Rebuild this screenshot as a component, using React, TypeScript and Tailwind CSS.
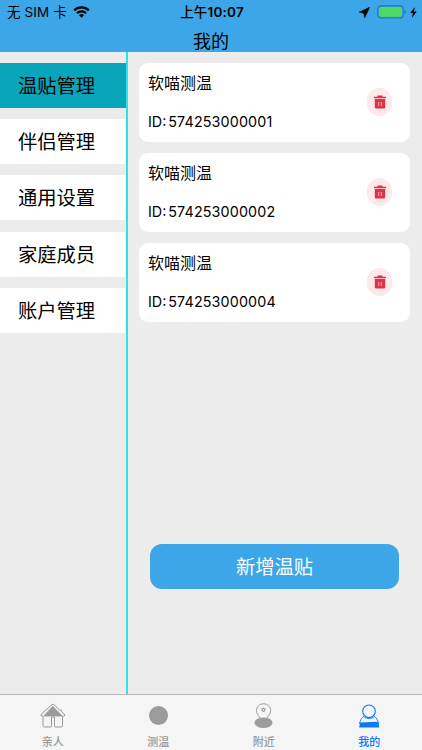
import React from "react";

const menu = ["温贴管理", "伴侣管理", "通用设置", "家庭成员", "账户管理"];
const patches = ["574253000001", "574253000002", "574253000004"];

function StatusBar() {
  return (
    <div className="grid h-6 grid-cols-[1fr_auto_1fr] items-center pl-[7px] pr-[5px] text-[13.5px] leading-6">
      <div className="flex items-center gap-[6px]">
        <span className="whitespace-nowrap tracking-[0.1px]">无 SIM 卡</span>
        <svg width="17" height="12" viewBox="0 0 17 12" fill="none" stroke="#000" strokeWidth="2.2">
          <path d="M1.2 4.4a10.4 10.4 0 0 1 14.6 0" />
          <path d="M4 7.3a6.4 6.4 0 0 1 9 0" />
          <path d="M8.5 11.8 6 9.3a3.5 3.5 0 0 1 5 0Z" fill="#000" stroke="none" />
        </svg>
      </div>
      <span className="whitespace-nowrap text-[13.5px] font-medium tracking-[0.2px]">
        上午<span className="font-semibold">10:07</span>
      </span>
      <div className="flex items-center justify-end">
        <svg width="11" height="11" viewBox="0 0 11 11" className="mr-[7px]">
          <path d="M10.9 0 0 5.2l4.7 1 1 4.8Z" stroke="#000" strokeWidth=".4" />
        </svg>
        <svg width="30" height="14" viewBox="0 0 30 14">
          <rect x=".75" y=".75" width="25.5" height="12.2" rx="3.5" fill="none" stroke="#247eae" strokeWidth="1.3" />
          <rect x="2" y="2" width="23" height="9.7" rx="2" fill="#4cd964" />
          <path d="M27.5 4.8c2 .7 2 3.5 0 4.2Z" fill="#247eae" />
        </svg>
        <svg width="7" height="11" viewBox="0 0 7 11" className="ml-[3px]">
          <path d="M4.8 0 .2 6h2.7l-1 4.8L6.8 4.5H4Z" />
        </svg>
      </div>
    </div>
  );
}

function TrashButton() {
  return (
    <button className="mb-[1px] flex h-7 w-[25px] items-center justify-center rounded-full bg-[#fde8eb]" aria-label="删除">
      <svg width="12" height="14" viewBox="0 0 12 14" fill="#dc3349">
        <path d="M3.5 1.8V.4h5v1.4H12v1.4H0V1.8Z" />
        <path d="M.8 3.9h10.4v8.4a1.2 1.2 0 0 1-1.2 1.2H2A1.2 1.2 0 0 1 .8 12.3Z" />
        <path d="M4.7 7v4M7.3 7v4" stroke="#f5a9b3" strokeWidth="1" />
      </svg>
    </button>
  );
}

function HomeIcon() {
  return (
    <svg width="26" height="26" viewBox="0 0 26 26" fill="none" stroke="#999" strokeWidth="1">
      <path d="M3 13.2v9.3q0 1.5 1.5 1.5h6q1 0 1-1.2V14h3v8.8q0 1.2 1 1.2H21q1.5 0 1.5-1.5v-9.3l2-.3q.9-.9-.2-1.8L21.6 8.8V7.3h-1.8L14.2 1.7q-1.2-1-2.4 0L1.3 11.1q-1 1 .2 1.9Z" />
      <path d="M4 12.9 12.8 3.4 22 12.9Z" fill="#9b9b9b" />
    </svg>
  );
}

function PinIcon() {
  return (
    <svg width="26" height="26" viewBox="0 0 26 26" fill="none" stroke="#999">
      <ellipse cx="12.5" cy="19.8" rx="9" ry="5.2" fill="#9d9d9d" stroke="none" />
      <path d="M12.5 20c-1.2-4.7-7-7.3-7-12.4C5.5 3.9 8.5.8 12.5.8s7.2 3.1 7.2 6.8c0 5.1-6 7.7-7.2 12.4Z" />
      <path d="M7.5 15.5h10l-3 5h-4Z" fill="#9d9d9d" stroke="none" />
      <circle cx="12.5" cy="6.8" r="1.5" strokeWidth="1.2" />
    </svg>
  );
}

function PersonIcon() {
  return (
    <svg width="26" height="26" viewBox="0 0 26 26" fill="none" stroke="#087bf5">
      <circle cx="13" cy="8.3" r="6.3" strokeWidth="1.1" />
      <path d="M8.5 13c-2.7 1-4.7 4.8-5 8M17.6 13c2.6 1 4.8 4.8 5.1 8M8.5 14.7q4.5 1.6 9 0" strokeWidth=".9" />
      <path d="M4.2 19.5 20.5 18.8q1.7-.1 2.1 1.5l.7 4.1H3.1Z" fill="#087bf5" stroke="none" />
    </svg>
  );
}

const tabs = [
  { label: "亲人", icon: <HomeIcon />, active: false },
  { label: "测温", icon: <span className="mt-[3px] size-[19px] rounded-full bg-[#9b9b9b]" />, active: false },
  { label: "附近", icon: <PinIcon />, active: false },
  { label: "我的", icon: <PersonIcon />, active: true },
];

export default function App() {
  return (
    <div className="flex h-[750px] w-[422px] flex-col overflow-hidden bg-[#ececec] font-[Inter,'Noto_Sans_CJK_SC',sans-serif] text-black">
      <header className="h-[52px] shrink-0 bg-[#3da6e8]">
        <StatusBar />
        <h1 className="pt-1 text-center text-[18px] leading-[28px]">我的</h1>
      </header>
      <main className="flex min-h-0 flex-1">
        <nav className="flex w-[126.4px] shrink-0 flex-col gap-[11.2px] pt-[11px]">
          {menu.map((label, i) => (
            <button
              key={label}
              className={`h-[45px] w-full pl-[18px] text-left text-[19.3px] leading-[46px] ${i === 0 ? "bg-[#08a5bb]" : "bg-white"}`}
            >
              {label}
            </button>
          ))}
        </nav>
        <div className="w-[1.6px] shrink-0 bg-[#2fe0f0]" />
        <section className="flex flex-1 flex-col pl-[11px] pr-3 pt-[11px]">
          <div className="flex flex-col gap-[11px]">
            {patches.map((id) => (
              <article key={id} className="flex h-[79px] items-center justify-between rounded-[9px] bg-white pl-[9px] pr-[18px]">
                <div className="flex flex-col gap-[15px]">
                  <span className="text-[16px] leading-6">软喵测温</span>
                  <span className="text-[14.3px] leading-6">
                    ID:<span className="ml-[2px] tracking-[0.15px]">{id}</span>
                  </span>
                </div>
                <TrashButton />
              </article>
            ))}
          </div>
          <button className="mx-[11px] mt-[221.5px] h-[45px] rounded-[12px] bg-[#3da6e8] text-[19.3px] leading-[46px] text-white">
            新增温贴
          </button>
        </section>
      </main>
      <footer className="grid h-14 shrink-0 grid-cols-4 border-t border-[#b9b9b9] bg-[#f5f5f5]">
        {tabs.map(({ label, icon, active }) => (
          <div key={label} className={`flex flex-col items-center pt-2 text-[11px] ${active ? "text-[#087bf5]" : "text-[#999]"}`}>
            <div className="flex h-[26px] items-start">{icon}</div>
            <span className="mt-[5px] font-medium leading-4">{label}</span>
          </div>
        ))}
      </footer>
    </div>
  );
}
